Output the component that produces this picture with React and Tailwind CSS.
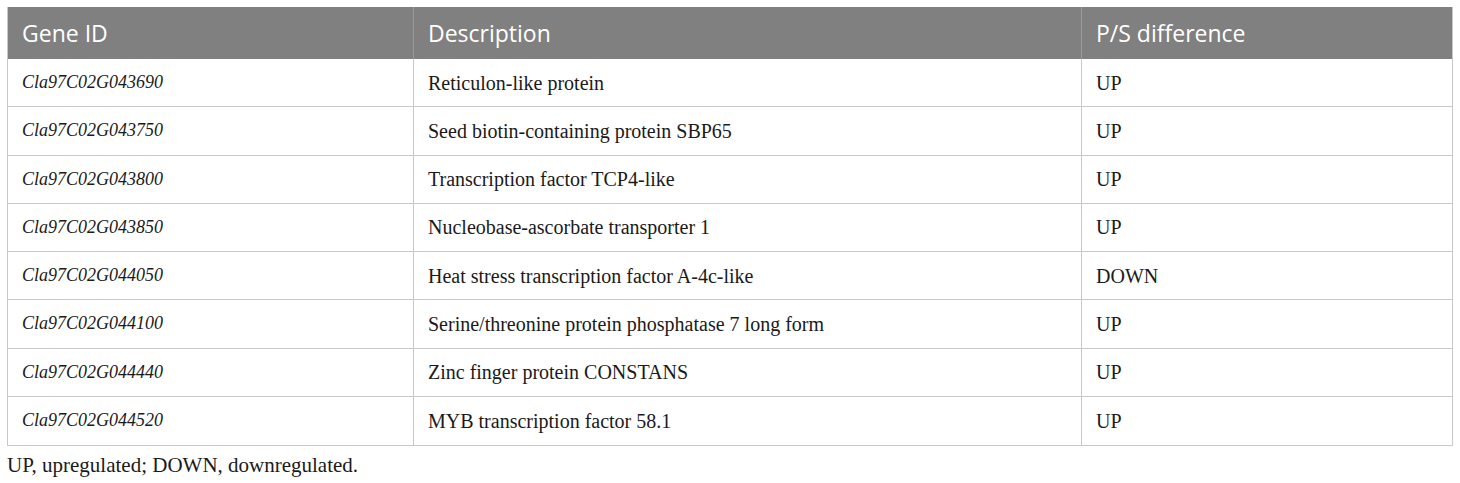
export default function App() {
  const rows = [
    ["Cla97C02G043690", "Reticulon-like protein", "UP"],
    ["Cla97C02G043750", "Seed biotin-containing protein SBP65", "UP"],
    ["Cla97C02G043800", "Transcription factor TCP4-like", "UP"],
    ["Cla97C02G043850", "Nucleobase-ascorbate transporter 1", "UP"],
    ["Cla97C02G044050", "Heat stress transcription factor A-4c-like", "DOWN"],
    ["Cla97C02G044100", "Serine/threonine protein phosphatase 7 long form", "UP"],
    ["Cla97C02G044440", "Zinc finger protein CONSTANS", "UP"],
    ["Cla97C02G044520", "MYB transcription factor 58.1", "UP"],
  ];
  const serif = { fontFamily: '"Liberation Serif", "Times New Roman", serif' };
  return (
    <div className="w-[1460px] h-[483px] bg-white pt-[7px] pl-[7px]">
      <div className="w-[1446px] border border-[#c8c8c8] border-t-0">
        <div
          className="grid grid-cols-[405px_668px_1fr] h-[52px] bg-[#808080] text-white text-[23px]"
          style={{ fontFamily: '"Open Sans", sans-serif' }}
        >
          <div className="flex items-center pl-[14px]">Gene ID</div>
          <div className="flex items-center pl-[14px] border-l border-[#9a9a9a]">Description</div>
          <div className="flex items-center pl-[14px] border-l border-[#9a9a9a]">P/S difference</div>
        </div>
        {rows.map((r, i) => (
          <div
            key={i}
            className={`grid grid-cols-[405px_668px_1fr] h-[48.25px] text-[#1a1a1a] ${i < rows.length - 1 ? "border-b border-[#c8c8c8]" : ""}`}
            style={serif}
          >
            <div className="flex items-center pl-[14px] italic text-[18px]">{r[0]}</div>
            <div className="flex items-center pl-[14px] border-l border-[#c8c8c8] text-[20px]">{r[1]}</div>
            <div className="flex items-center pl-[14px] border-l border-[#c8c8c8] text-[20px]">{r[2]}</div>
          </div>
        ))}
      </div>
      <div className="mt-[9px] text-[21px] text-[#1a1a1a] leading-none" style={serif}>
        UP, upregulated; DOWN, downregulated.
      </div>
    </div>
  );
}
